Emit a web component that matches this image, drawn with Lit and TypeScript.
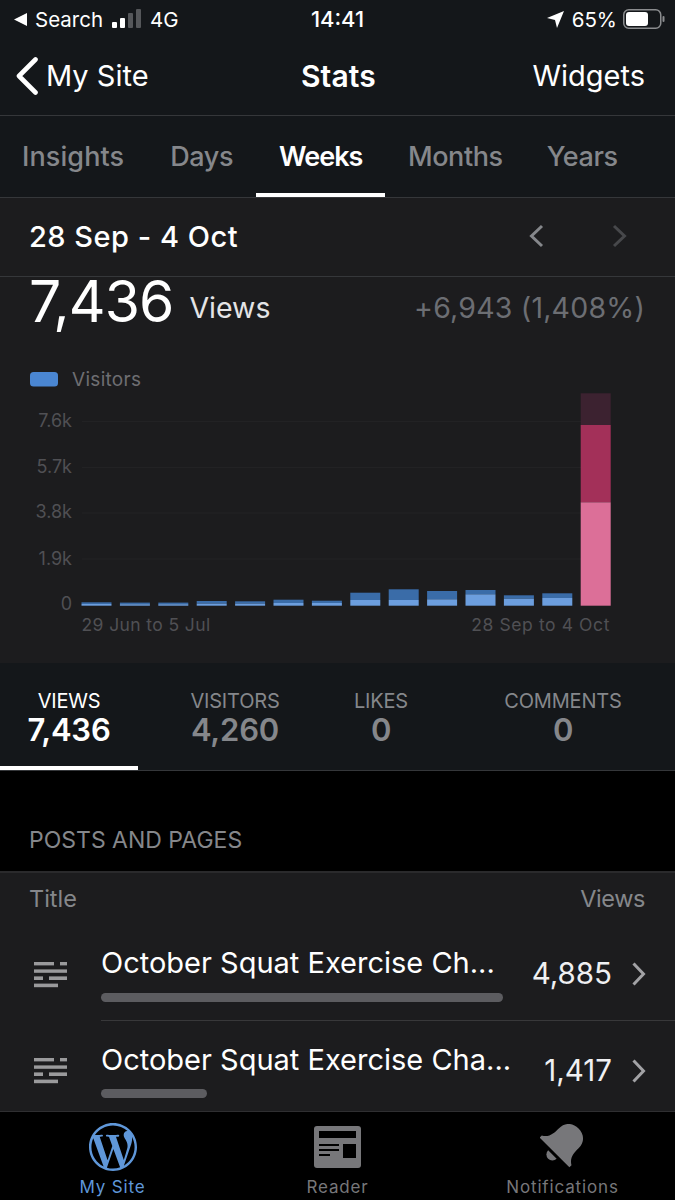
import { LitElement, html, css, svg } from "lit";
import { customElement } from "lit/decorators.js";

const BAR_X0 = 81.5;
const BAR_STEP = 38.4;
const BAR_W = 30;
const BASE = 328.7; // 605.7 on the page, svg starts at 277
const blueBars: [number, number][] = [
  [602.3, 604],[602.6, 604.2],[602.6, 604.2],[601, 603.6],[601.3, 603.6],[599.7, 603],[600.7, 603],
  [592.7, 600],[589.3, 600],[591, 599.3],[590, 594.3],[595.3, 598.7],[593.3, 598],
];
const yLabels: [string, number][] = [["7.6k", 420],["5.7k", 466],["3.8k", 511.5],["1.9k", 558],["0", 603.5]];

@customElement("app-root")
export class AppRoot extends LitElement {
  static styles = css`
    :host { display: block; width: 675px; height: 1200px; overflow: hidden; background: #000; color: #fff;
      font-family: Inter, "Liberation Sans", sans-serif; }
    svg { display: block; }
    .top { background: #14171a; }
    .status { height: 46px; display: flex; align-items: center; padding: 0 10px 8px 14px; font-size: 20.5px; font-weight: 400; box-sizing: border-box; }
    .status .l, .status .r { display: flex; align-items: center; }
    .status .l { flex: 1; }
    .status .r { flex: 1; justify-content: flex-end; }
    .status .time { font-weight: 500; font-size: 22px; width: 60px; margin-right: 4px; text-align: center; white-space: nowrap; }
    .nav { height: 59px; padding: 0 30px 10px 16px; display: flex; align-items: center; font-size: 29px; border-bottom: 1px solid #35373a; }
    .nav .left { flex: none; width: 285px; display: flex; align-items: center; gap: 8px; }
    .nav .title { font-weight: 600; font-size: 30px; letter-spacing: 0.1px; }
    .nav .right { flex: 1; text-align: right; }
    .tabs { height: 81px; display: flex; border-bottom: 1px solid #35373a; font-size: 27px; color: #85878b; font-weight: 500; }
    .tab { padding: 0 23px; display: flex; align-items: center; box-sizing: border-box; letter-spacing: -0.4px; }
    .tab.first { letter-spacing: 0.1px; padding-left: 22px; }
    .tab.on { color: #fff; font-weight: 600; letter-spacing: -1px; box-shadow: inset 0 -4px 0 #fff; }
    .tab.tight { padding-right: 21.5px; padding-left: 22.5px; }
    .date { height: 76px; background: #1c1c1e; border-bottom: 1px solid #35373a; display: flex; align-items: center; padding: 0 48px 2px 29px; font-size: 29px; font-weight: 500; justify-content: space-between; letter-spacing: 0.5px; }
    .arrows { display: flex; gap: 68px; }
    .summary { background: #1c1c1e; height: 386px; }
    .head { height: 50px; display: flex; align-items: center; padding: 0 30px 0 29px; }
    .head .big { font-size: 57px; line-height: 50px; font-weight: 400; letter-spacing: -0.9px; margin-right: 16px; }
    .head .lab { font-size: 28.5px; color: #e4e4e6; flex: 1; padding-top: 10px; }
    .head .delta { font-size: 28.5px; color: #6c6e73; padding-top: 10px; letter-spacing: 0.2px; }
    .chart-text { font-family: Inter, "Liberation Sans", sans-serif; }
    .stats { height: 107px; background: #14171a; border-bottom: 1px solid #35373a; display: flex; }
    .st { display: flex; flex-direction: column; align-items: center; padding-top: 28px; box-sizing: border-box; color: #85878b; }
    .st .k { font-size: 20px; line-height: 20px; letter-spacing: -0.2px; white-space: nowrap; }
    .st .v { font-size: 31px; line-height: 38px; font-weight: 600; letter-spacing: -0.2px; }
    .st.on { color: #fff; box-shadow: inset 0 -4px 0 #fff; }
    .gap { height: 102px; background: #000; border-bottom: 2px solid #2a2a2c; box-sizing: border-box; display: flex; align-items: flex-end; padding: 0 29px 17px; font-size: 23px; color: #85878b; }
    .card { background: #1c1c1e; height: 238px; overflow: hidden; }
    .card-head { height: 50px; padding: 0 30px 7px 29px; display: flex; justify-content: space-between; align-items: center; font-size: 23.5px; color: #85878b; }
    .card-head .views { letter-spacing: -0.4px; }
    .row { display: flex; padding-left: 34px; position: relative; height: 91px; box-sizing: border-box; }
    .row .ic { width: 33px; margin-right: 34px; padding-top: 32px; flex: none; }
    .row .main { width: 402px; flex: none; padding-top: 13px; }
    .row .t { font-size: 29px; line-height: 40px; white-space: nowrap; }
    .bar { height: 9px; border-radius: 5px; background: #5c5c60; margin-top: 10px; }
    .row .val { flex: 1; text-align: right; font-size: 29.5px; padding-top: 23px; line-height: 40px; color: #f0f0f2; }
    .row .chev { width: 63px; padding: 32px 0 0 20px; box-sizing: border-box; flex: none; }
    .row.first::after { content: ""; position: absolute; left: 101px; right: 0; bottom: 0; height: 1px; background: #38383a; }
    .row.second .ic { padding-top: 37px; }
    .row.second .main { padding-top: 19px; }
    .row.second .bar { margin-top: 9px; }
    .row.second .val { padding-top: 29px; }
    .row.second .chev { padding-top: 38px; }
    .tabbar { height: 89px; background: #000; border-top: 1px solid #2f2f31; box-sizing: border-box; display: grid; grid-template-columns: 225px 225px 225px; font-size: 17px; letter-spacing: 0.85px; color: #77777a; }
    .ti { display: flex; flex-direction: column; align-items: center; padding-top: 10px; }
    .ti .ico { height: 50px; display: flex; align-items: center; }
    .ti .lb { margin-top: 4px; line-height: 22px; }
    .ti.on { color: #5f97d9; }
  `;

  private rowIcon() {
    return html`<svg width="33" height="26" viewBox="0 0 33 26" fill="#9a9a9c">
      <rect x="0" y="0" width="20" height="3.4"/><rect x="26" y="0" width="7" height="3.4"/>
      <rect x="0" y="7.4" width="33" height="3.4"/>
      <rect x="0" y="14.4" width="9" height="3.6"/><rect x="15" y="14.4" width="18" height="3.6"/>
      <rect x="0" y="21.6" width="24" height="3.6"/></svg>`;
  }
  private chev() {
    return html`<svg width="14" height="24" viewBox="0 0 14 24" fill="none" stroke="#a2a2a5" stroke-width="3"><path d="M1.5 1.5 L11.5 12 L1.5 22.5"/></svg>`;
  }
  private chart() {
    const grid = [421.5, 467.5, 513, 559].map(y => svg`<line x1="82" x2="610" y1=${y - 277} y2=${y - 277} stroke="#222224" />`);
    const labels = yLabels.map(([t, y]) => svg`<text class="chart-text" x="72" y=${y - 277 + 6.5} text-anchor="end" font-size="18" fill="#505054">${t}</text>`);
    const bars = blueBars.map(([top, split], i) => {
      const x = BAR_X0 + i * BAR_STEP;
      return svg`
        <rect x=${x} y=${top - 277} width=${BAR_W} height=${split - top} fill="#3a6ca8" />
        <rect x=${x} y=${split - 277} width=${BAR_W} height=${BASE - (split - 277)} fill="#6c9ede" />`;
    });
    const lx = BAR_X0 + 13 * BAR_STEP;
    return html`<svg width="675" height="336" viewBox="0 50 675 336">
      <rect x="30" y="95" width="28" height="14.5" rx="3.5" fill="#4a86d2"/>
      <text class="chart-text" x="72" y="108.5" font-size="19" fill="#6e6e72" letter-spacing="0.3">Visitors</text>
      ${grid}${labels}${bars}
      <rect x=${lx} y="116.3" width=${BAR_W} height="32" fill="#3c2230"/>
      <rect x=${lx} y="148" width=${BAR_W} height="77.3" fill="#a33059"/>
      <rect x=${lx} y="225.3" width=${BAR_W} height="103.4" fill="#dc6f98"/>
      <text class="chart-text" x="81.5" y="353.5" font-size="17.5" fill="#505054" letter-spacing="0.4">29 Jun to 5 Jul</text>
      <text class="chart-text" x="610" y="353.5" font-size="17.5" fill="#505054" text-anchor="end" letter-spacing="0.6">28 Sep to 4 Oct</text>
    </svg>`;
  }

  render() {
    return html`
      <div class="top">
        <div class="status">
          <div class="l">
            <svg width="14" height="13" viewBox="0 0 14 13" style="margin-right:7px"><path d="M13 0 V13 L0 6.5 Z" fill="#fff"/></svg>
            <span>Search</span>
            <svg width="29" height="20" viewBox="0 0 29 20" style="margin:0 9px 0 9px" fill="#fff">
              <rect x="0" y="13" width="5" height="6" rx="1"/><rect x="8" y="9" width="5" height="10" rx="1"/>
              <rect x="16" y="4" width="5" height="15" rx="1" fill="#55575a"/><rect x="24" y="0" width="5" height="19" rx="1" fill="#55575a"/>
            </svg>
            <span>4G</span>
          </div>
          <div class="time">14:41</div>
          <div class="r">
            <svg width="17" height="17" viewBox="0 0 17 17" style="margin-right:8px"><path d="M17 0 L10 17 L8 9 L0 7 Z" fill="#fff"/></svg>
            <span>65%</span>
            <svg width="42" height="20" viewBox="0 0 42 20" style="margin-left:6px">
              <rect x="0.75" y="0.75" width="37" height="18.5" rx="5" fill="none" stroke="#8a8c8e" stroke-width="1.5"/>
              <rect x="3" y="3" width="22" height="14" rx="3" fill="#fff"/>
              <rect x="39.5" y="7" width="2" height="6" rx="1" fill="#8a8c8e"/>
            </svg>
          </div>
        </div>
        <div class="nav">
          <div class="left">
            <svg width="22" height="38" viewBox="0 0 22 38" fill="none" stroke="#fff" stroke-width="4.6" stroke-linecap="round" stroke-linejoin="round"><path d="M19.5 2.5 L3 19 L19.5 35.5"/></svg>
            <span>My Site</span>
          </div>
          <div class="title">Stats</div>
          <div class="right">Widgets</div>
        </div>
        <div class="tabs">
          <div class="tab first">Insights</div><div class="tab">Days</div><div class="tab on">Weeks</div><div class="tab tight">Months</div><div class="tab tight">Years</div>
        </div>
      </div>
      <div class="date">
        <span>28 Sep - 4 Oct</span>
        <div class="arrows">
          <svg width="15" height="24" viewBox="0 0 15 24" fill="none" stroke="#85878b" stroke-width="3"><path d="M13 2 L2.5 12 L13 22"/></svg>
          <svg width="15" height="24" viewBox="0 0 15 24" fill="none" stroke="#47484b" stroke-width="3"><path d="M2 2 L12.5 12 L2 22"/></svg>
        </div>
      </div>
      <div class="summary">
        <div class="head">
          <span class="big">7,436</span><span class="lab">Views</span><span class="delta">+6,943 (1,408%)</span>
        </div>
        ${this.chart()}
      </div>
      <div class="stats">
        <div class="st on" style="width:138px"><span class="k">VIEWS</span><span class="v">7,436</span></div>
        <div class="st" style="width:194px"><span class="k">VISITORS</span><span class="v">4,260</span></div>
        <div class="st" style="width:98px"><span class="k">LIKES</span><span class="v">0</span></div>
        <div class="st" style="width:224px;margin-left:21px"><span class="k">COMMENTS</span><span class="v">0</span></div>
      </div>
      <div class="gap">POSTS AND PAGES</div>
      <div class="card">
        <div class="card-head"><span>Title</span><span class="views">Views</span></div>
        <div class="row first">
          <div class="ic">${this.rowIcon()}</div>
          <div class="main"><div class="t">October Squat Exercise Ch...</div><div class="bar"></div></div>
          <div class="val">4,885</div>
          <div class="chev">${this.chev()}</div>
        </div>
        <div class="row second">
          <div class="ic">${this.rowIcon()}</div>
          <div class="main"><div class="t">October Squat Exercise Cha...</div><div class="bar" style="width:106px"></div></div>
          <div class="val">1,417</div>
          <div class="chev">${this.chev()}</div>
        </div>
      </div>
      <div class="tabbar">
        <div class="ti on">
          <div class="ico"><svg width="48" height="48" viewBox="0 0 24 24" fill="#5f97d9"><path d="M21.469 6.825c.84 1.537 1.318 3.3 1.318 5.175 0 3.979-2.156 7.456-5.363 9.325l3.295-9.527c.615-1.54.82-2.771.82-3.864 0-.405-.026-.78-.07-1.11m-7.981.105c.647-.03 1.232-.105 1.232-.105.582-.075.514-.93-.067-.899 0 0-1.755.135-2.88.135-1.064 0-2.85-.15-2.85-.15-.585-.03-.661.855-.075.885 0 0 .54.061 1.125.09l1.68 4.605-2.37 7.08L5.354 6.9c.649-.03 1.234-.1 1.234-.1.585-.075.516-.93-.065-.896 0 0-1.746.138-2.874.138-.2 0-.438-.008-.69-.015C4.911 3.15 8.235 1.215 12 1.215c2.809 0 5.365 1.072 7.286 2.833-.046-.003-.091-.009-.141-.009-1.06 0-1.812.923-1.812 1.914 0 .89.513 1.643 1.06 2.531.411.72.89 1.643.89 2.977 0 .915-.354 1.994-.821 3.479l-1.075 3.585-3.9-11.61.001.014zM12 22.784c-1.059 0-2.081-.153-3.048-.437l3.237-9.406 3.315 9.087c.024.053.05.101.078.149-1.12.393-2.325.609-3.582.609M1.211 12c0-1.564.336-3.05.935-4.39L7.29 21.709C3.694 19.96 1.212 16.271 1.211 12M12 0C5.385 0 0 5.385 0 12s5.385 12 12 12 12-5.385 12-12S18.615 0 12 0"/></svg></div>
          <div class="lb">My Site</div>
        </div>
        <div class="ti">
          <div class="ico"><svg width="47" height="42" viewBox="0 0 47 42">
            <rect width="47" height="42" rx="3" fill="#77777a"/>
            <rect x="5" y="5" width="37" height="7" fill="#000"/>
            <rect x="29" y="18" width="13" height="14" fill="#000"/>
            <rect x="5" y="18" width="20" height="2" fill="#000"/><rect x="5" y="23" width="20" height="2" fill="#000"/><rect x="5" y="28" width="11" height="2" fill="#000"/>
          </svg></div>
          <div class="lb">Reader</div>
        </div>
        <div class="ti">
          <div class="ico"><svg width="46" height="46" viewBox="-23 -23 46 46"><g transform="translate(0 -3) rotate(45)" fill="#77777a">
            <path d="M-21 9 C-14 5 -14 -2 -14 -8 C-14 -17 -8 -22 0 -22 C8 -22 14 -17 14 -8 C14 -2 14 5 21 9 L21 12 L-21 12 Z"/>
            <path d="M-6 15 A6 6 0 0 0 6 15 Z"/></g></svg></div>
          <div class="lb">Notifications</div>
        </div>
      </div>
    `;
  }
}
